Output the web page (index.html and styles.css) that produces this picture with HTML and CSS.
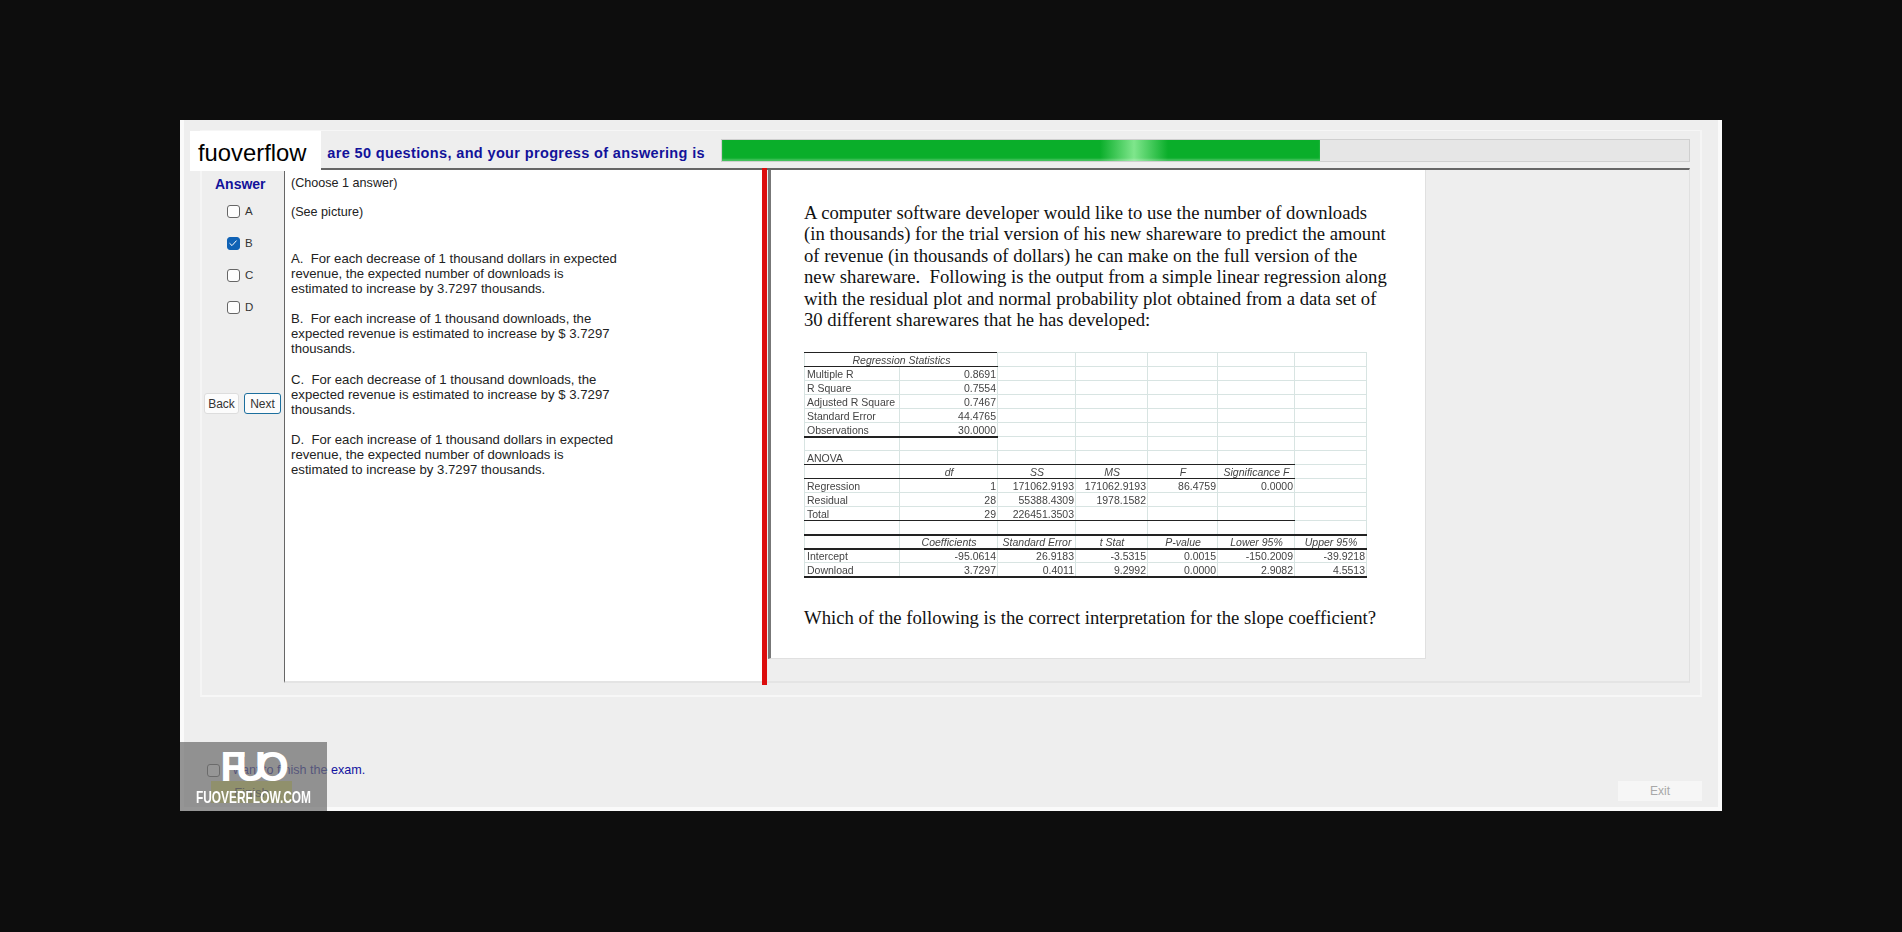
FILE: index.html
```html
<!DOCTYPE html>
<html lang="en">
<head>
    <meta charset="UTF-8">
    <title>Exam</title>
    <link rel="stylesheet" href="styles.css">
</head>
<body>
    <div class="window">
        <div class="frame">
            <div class="head">
                <span class="head-text">are 50 questions, and your progress of answering is</span>
                <div class="progress"><div class="progress-fill"></div></div>
            </div>
            <div class="main">
                <div class="answers">
                    <div class="answers-title">Answer</div>
                    <div class="choice"><span class="box"></span>A</div>
                    <div class="choice"><span class="box checked"><svg viewBox="0 0 12 12" width="12" height="12"><path d="M2.5 6.2 5 8.6 9.5 3.6" fill="none" stroke="#fff" stroke-width="1"/></svg></span>B</div>
                    <div class="choice"><span class="box"></span>C</div>
                    <div class="choice"><span class="box"></span>D</div>
                    <div class="nav">
                        <button class="btn">Back</button>
                        <button class="btn btn-active">Next</button>
                    </div>
                </div>
                <div class="question">
                    <p class="q-choose">(Choose 1 answer)</p>
                    <p class="q-see">(See picture)</p>
                    <p class="q-option">A.&nbsp; For each decrease of 1 thousand dollars in expected<br>revenue, the expected number of downloads is<br>estimated to increase by 3.7297 thousands.</p>
                    <p class="q-option">B.&nbsp; For each increase of 1 thousand downloads, the<br>expected revenue is estimated to increase by $ 3.7297<br>thousands.</p>
                    <p class="q-option">C.&nbsp; For each decrease of 1 thousand downloads, the<br>expected revenue is estimated to increase by $ 3.7297<br>thousands.</p>
                    <p class="q-option">D.&nbsp; For each increase of 1 thousand dollars in expected<br>revenue, the expected number of downloads is<br>estimated to increase by 3.7297 thousands.</p>
                </div>
                <div class="splitter"></div>
                <div class="picture-pane">
                    <div class="picture">
                        <p class="pic-text">A computer software developer would like to use the number of downloads<br>(in thousands) for the trial version of his new shareware to predict the amount<br>of revenue (in thousands of dollars) he can make on the full version of the<br>new shareware.&nbsp; Following is the output from a simple linear regression along<br>with the residual plot and normal probability plot obtained from a data set of<br>30 different sharewares that he has developed:</p>
                        <table class="stats">
                            <colgroup>
                                <col class="c1"><col class="c2"><col class="c3"><col class="c4"><col class="c5"><col class="c6"><col class="c7">
                            </colgroup>
                            <tr class="line-bottom"><td colspan="2" class="head-cell line-top center">Regression Statistics</td><td></td><td></td><td></td><td></td><td></td></tr>
                            <tr><td>Multiple R</td><td class="n">0.8691</td><td></td><td></td><td></td><td></td><td></td></tr>
                            <tr><td>R Square</td><td class="n">0.7554</td><td></td><td></td><td></td><td></td><td></td></tr>
                            <tr><td>Adjusted R Square</td><td class="n">0.7467</td><td></td><td></td><td></td><td></td><td></td></tr>
                            <tr><td>Standard Error</td><td class="n">44.4765</td><td></td><td></td><td></td><td></td><td></td></tr>
                            <tr class="line-bottom-two"><td>Observations</td><td class="n">30.0000</td><td></td><td></td><td></td><td></td><td></td></tr>
                            <tr><td></td><td></td><td></td><td></td><td></td><td></td><td></td></tr>
                            <tr class="line-bottom-six"><td>ANOVA</td><td></td><td></td><td></td><td></td><td></td><td></td></tr>
                            <tr class="line-bottom-six head-row"><td></td><td class="center">df</td><td class="center">SS</td><td class="center">MS</td><td class="center">F</td><td class="center">Significance F</td><td></td></tr>
                            <tr><td>Regression</td><td class="n">1</td><td class="n">171062.9193</td><td class="n">171062.9193</td><td class="n">86.4759</td><td class="n">0.0000</td><td></td></tr>
                            <tr><td>Residual</td><td class="n">28</td><td class="n">55388.4309</td><td class="n">1978.1582</td><td></td><td></td><td></td></tr>
                            <tr class="line-bottom-six"><td>Total</td><td class="n">29</td><td class="n">226451.3503</td><td></td><td></td><td></td><td></td></tr>
                            <tr class="line-bottom-all"><td></td><td></td><td></td><td></td><td></td><td></td><td></td></tr>
                            <tr class="line-bottom-all head-row"><td></td><td class="center">Coefficients</td><td class="center">Standard Error</td><td class="center">t Stat</td><td class="center">P-value</td><td class="center">Lower 95%</td><td class="center">Upper 95%</td></tr>
                            <tr><td>Intercept</td><td class="n">-95.0614</td><td class="n">26.9183</td><td class="n">-3.5315</td><td class="n">0.0015</td><td class="n">-150.2009</td><td class="n">-39.9218</td></tr>
                            <tr class="line-bottom-all"><td>Download</td><td class="n">3.7297</td><td class="n">0.4011</td><td class="n">9.2992</td><td class="n">0.0000</td><td class="n">2.9082</td><td class="n">4.5513</td></tr>
                        </table>
                        <p class="pic-text pic-last">Which of the following is the correct interpretation for the slope coefficient?</p>
                    </div>
                </div>
            </div>
        </div>
        <div class="foot">
            <div class="finish-group">
                <div class="finish-check"><span class="box"></span>I want to finish the exam.</div>
                <button class="btn-finish">Finish</button>
            </div>
            <button class="btn-exit">Exit</button>
        </div>
        <div class="logo">fuoverflow</div>
        <div class="watermark">
            <div class="wm-mark">FUO</div>
            <div class="wm-text">FUOVERFLOW.COM</div>
        </div>
    </div>
</body>
</html>
```

FILE: styles.css
```css
html, body {
    margin: 0;
    padding: 0;
    height: 100%;
}
body {
    background-color: #0d0d0d;
    padding: 120px 0 0 180px;
    box-sizing: border-box;
    font-family: "Liberation Sans", Arial, sans-serif;
    overflow: hidden;
}
.window {
    position: relative;
    width: 1542px;
    height: 691px;
    box-sizing: border-box;
    padding: 10px 20px 0;
    background-color: #eeeeee;
    border-left: 4px solid #fafafa;
    border-right: 4px solid #fafafa;
    border-bottom: 4px solid #fafafa;
    display: flex;
    flex-direction: column;
}
.frame {
    height: 567px;
    box-sizing: border-box;
    margin: 0 0 0 -4px;
    width: 1502px;
    padding-top: 8px;
    border-top: 1px solid #f6f6f6;
    border-left: 2px solid #f5f5f5;
    border-right: 2px solid #f5f5f5;
    border-bottom: 2px solid #f7f7f7;
}
.head {
    display: flex;
    justify-content: flex-end;
    align-items: center;
    gap: 16px;
    height: 23px;
    padding-right: 10px;
}
.head-text {
    margin-top: 4px;
    font-size: 14.5px;
    font-weight: bold;
    color: #12129a;
    letter-spacing: 0.36px;
}
.progress {
    width: 969px;
    height: 23px;
    box-sizing: border-box;
    background-color: #e6e6e6;
    border: 1px solid #cfcfcf;
}
.progress-fill {
    width: 598px;
    height: 100%;
    background: linear-gradient(to right, #0aae2a 0, #0aae2a 378px, #7fe68c 412px, #0aae2a 446px, #0aae2a 100%);
    box-shadow: inset 0 -2px 2px rgba(255, 255, 255, 0.25);
}
.main {
    display: flex;
    height: 515px;
    margin-top: 6px;
    margin-right: 10px;
}
.answers {
    width: 82px;
    flex: none;
    font-size: 11.5px;
    color: #333;
}
.answers-title {
    margin: 8px 0 0 13px;
    font-size: 14px;
    font-weight: bold;
    color: #12129a;
    line-height: 16px;
}
.choice {
    display: flex;
    align-items: center;
    height: 32px;
    padding-left: 25px;
    gap: 5px;
}
.answers-title + .choice {
    margin-top: 3px;
}
.box {
    display: inline-block;
    width: 13px;
    height: 13px;
    box-sizing: border-box;
    border: 1px solid #666;
    border-radius: 3px;
    background-color: #fdfdfd;
    flex: none;
}
.box.checked {
    background-color: #0f62b5;
    border-color: #0f62b5;
}
.box svg {
    display: block;
    margin: -1px 0 0 -1px;
}
.nav {
    display: flex;
    gap: 5px;
    margin: 70px 0 0 2px;
}
.btn {
    height: 21px;
    width: 35px;
    padding: 0;
    font-family: inherit;
    font-size: 12px;
    color: #333;
    background-color: #fcfcfc;
    border: 1px solid #dddddd;
    border-radius: 3px;
}
.btn-active {
    width: 37px;
    border-color: #1c6f9e;
}
.question {
    width: 478px;
    flex: none;
    box-sizing: border-box;
    padding: 6px 0 0 6px;
    background-color: #fff;
    border-left: 1px solid #666;
    border-top: 2px solid #666;
    border-bottom: 2px solid #e4e4e4;
    font-size: 13.15px;
    line-height: 15px;
    color: #222;
}
.question p {
    margin: 0;
}
.question .q-choose, .question .q-see {
    font-size: 12.6px;
}
.question .q-see {
    margin-top: 14px;
}
.question .q-option {
    margin-bottom: 15.3px;
}
.question .q-see + .q-option {
    margin-top: 31px;
}
.splitter {
    width: 5px;
    flex: none;
    background-color: #dc0d0d;
    margin-bottom: -2px;
}
.picture-pane {
    flex: 1;
    padding-left: 1px;
    border-top: 2px solid #666;
    border-right: 1px solid #e0e0e0;
    border-bottom: 2px solid #e4e4e4;
}
.picture {
    width: 658px;
    height: 489px;
    box-sizing: border-box;
    padding: 32px 0 0 33px;
    background-color: #fff;
    border-left: 3px solid #777;
    border-bottom: 1px solid #e0e0e0;
    border-right: 1px solid #e0e0e0;
}
.pic-text {
    margin: 0;
    font-family: "Liberation Serif", "Times New Roman", serif;
    font-size: 18.7px;
    line-height: 21.4px;
    color: #111;
    white-space: nowrap;
}
.pic-last {
    margin-top: 29px;
}
.stats {
    margin-top: 22px;
    width: 562px;
    border-collapse: collapse;
    table-layout: fixed;
    font-size: 10.5px;
    color: #444;
    filter: blur(0.3px);
}
.c1 { width: 95px; }
.c2 { width: 98px; }
.c3 { width: 78px; }
.c4 { width: 72px; }
.c5 { width: 70px; }
.c6 { width: 77px; }
.c7 { width: 72px; }
.stats td {
    height: 14px;
    padding: 0 1px 0 2px;
    box-sizing: border-box;
    line-height: 12px;
    border: 1px solid #d8e4e2;
    white-space: nowrap;
    overflow: hidden;
}
.stats .n { text-align: right; }
.stats .center { text-align: center; }
.head-row td, .stats .head-cell { font-style: italic; }
.stats .line-top { border-top: 1px solid #222; }
.stats .line-bottom td:nth-child(1) { border-bottom: 1px solid #222; }
.stats .line-bottom-two td:nth-child(-n+2) { border-bottom: 2px solid #222; }
.stats .line-bottom-six td:nth-child(-n+6) { border-bottom: 1px solid #222; }
.stats .line-bottom-all td { border-bottom: 2px solid #222; }
.foot {
    flex: 1;
    display: flex;
    justify-content: space-between;
    align-items: flex-start;
    padding-top: 64px;
    margin-left: 3px;
}
.finish-check {
    display: flex;
    align-items: center;
    gap: 6px;
    font-size: 12.6px;
    line-height: 18px;
    color: #1212a0;
    height: 14px;
    padding-top: 2px;
}
.finish-group {
    display: flex;
    flex-direction: column;
    gap: 4px;
}
.btn-finish {
    width: 81px;
    height: 22px;
    margin-left: 4px;
    padding: 0;
    font-family: inherit;
    font-size: 13px;
    background-color: #e8e86a;
    color: #444;
    border: none;
}
.btn-exit {
    width: 84px;
    height: 20px;
    margin-top: 20px;
    margin-right: -4px;
    padding: 0;
    font-family: inherit;
    font-size: 12px;
    color: #a8a8a8;
    background-color: #f6f6f6;
    border: none;
}
.logo {
    position: absolute;
    left: 6px;
    top: 11px;
    width: 131px;
    height: 40px;
    box-sizing: border-box;
    padding: 4px 0 0 8px;
    background-color: #fff;
    color: #000;
    font-size: 23.8px;
    line-height: 36px;
}
.watermark {
    position: absolute;
    left: -4px;
    bottom: -4px;
    width: 147px;
    height: 69px;
    background-color: rgba(110, 110, 110, 0.72);
    color: #fff;
    text-align: center;
}
.wm-mark {
    margin-top: 6px;
    font-size: 42px;
    line-height: 38px;
    font-weight: bold;
    letter-spacing: -10px;
    padding-right: 8px;
}
.wm-text {
    margin: 3px 0 0 16px;
    width: 165px;
    text-align: left;
    font-size: 17px;
    line-height: 18px;
    font-weight: bold;
    white-space: nowrap;
    transform: scaleX(0.7);
    transform-origin: left center;
}
```
